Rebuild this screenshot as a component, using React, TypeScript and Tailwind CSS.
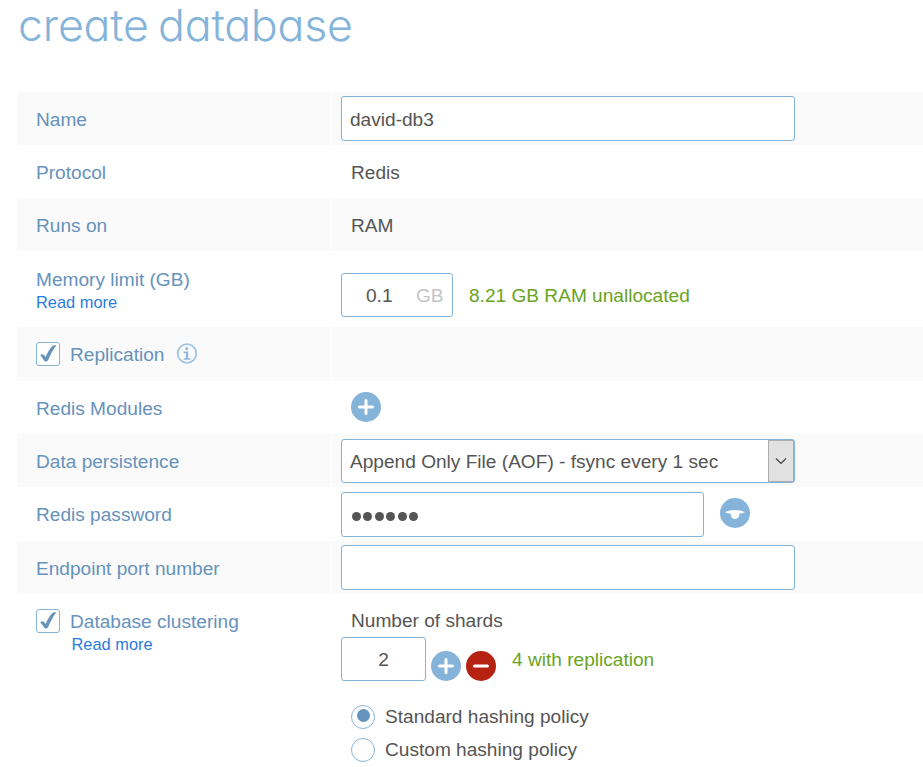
import type { ReactNode } from "react";

function Row({ label, children, className = "", shaded = false }: { label: ReactNode; children?: ReactNode; className?: string; shaded?: boolean }) {
  const bg = shaded ? "bg-[#fafafa]" : "bg-white";
  return (
    <div className={`flex gap-px ${className}`}>
      <div className={`w-[314px] shrink-0 pl-[19px] text-[#6692bb] ${bg}`}>{label}</div>
      <div className={`flex-1 pl-[9px] ${bg}`}>{children}</div>
    </div>
  );
}

const field = "flex items-center rounded-[3px] border border-[#85b4db] bg-white";

function Plus() {
  return (
    <svg width="30" height="30" viewBox="0 0 30 30" className="shrink-0">
      <circle cx="15" cy="15" r="15" fill="#85b3da" />
      <path d="M15 8.5v13M8.5 15h13" stroke="white" strokeWidth="3" strokeLinecap="round" />
    </svg>
  );
}

function Minus() {
  return (
    <svg width="30" height="30" viewBox="0 0 30 30" className="shrink-0">
      <circle cx="15" cy="15" r="15" fill="#b72312" />
      <path d="M8.5 15h13" stroke="white" strokeWidth="3" strokeLinecap="round" />
    </svg>
  );
}

function CheckBox() {
  return (
    <span className="flex h-6 w-6 shrink-0 rounded-[3px] border border-[#85b4db] bg-white">
      <svg width="22" height="22" viewBox="0 0 22 22">
        <path d="M3.2 12.4C4.4 10.8 6.2 10.9 7.1 12.2L8.6 14.1C10.3 9.8 12.6 5.8 15 3.4C16.1 2.3 18 2.1 19.3 2.4C15.8 6.8 13.4 11.6 11.3 16.8C10.4 18.9 7.9 18.9 6.9 17.2C5.8 15.2 4.8 13.8 3.2 12.4Z" fill="#6692bb" />
      </svg>
    </span>
  );
}

function Info() {
  return (
    <svg width="21" height="21" viewBox="0 0 21 21" className="-mt-px ml-3 shrink-0">
      <circle cx="11" cy="10.5" r="9.3" fill="none" stroke="#a0c5e3" strokeWidth="1.8" />
      <circle cx="10.7" cy="5.6" r="1.6" fill="#8fbadf" />
      <path d="M7.6 8.6h4.6v6.6h2.2v1.6H7.6v-1.6h2.2v-5h-2.2z" fill="#8fbadf" />
    </svg>
  );
}

export default function App() {
  return (
    <main className="h-[767px] w-[923px] overflow-hidden bg-white pl-[17px] font-['Liberation_Sans',Arial,sans-serif] text-[19.1px] leading-[22px] text-[#555]">
      <h1 className="h-[92px] w-fit origin-left scale-x-[1.027] whitespace-nowrap pl-px pt-px font-['Inter',sans-serif] text-[43.5px] font-light leading-[49px] tracking-[-0.2px] text-[#85b4db] [font-feature-settings:'cv11'] [word-spacing:-3px]">create database</h1>

      <Row shaded className="h-[53px]" label={<div className="pt-[17px]">Name</div>}>
        <div className="pt-1"><div className={`${field} h-[45px] w-[454px] pl-2 pt-0.5`}>david-db3</div></div>
      </Row>
      <Row className="h-[53px]" label={<div className="pt-[17px]">Protocol</div>}>
        <div className="pl-[10px] pt-[17px]">Redis</div>
      </Row>
      <Row shaded className="h-[53px]" label={<div className="pt-[17px]">Runs on</div>}>
        <div className="pl-[10px] pt-[17px]">RAM</div>
      </Row>
      <Row className="h-[76px]" label={
        <div className="pt-[18px]">
          <div>Memory limit (GB)</div>
          <div className="text-[16.4px] text-[#2a7be0]">Read more</div>
        </div>
      }>
        <div className="flex items-center pt-[22px]">
          <div className={`${field} h-11 w-28 pl-6 pt-0.5`}><span className="w-[50px]">0.1</span><span className="text-[#c4c4c4]">GB</span></div>
          <span className="ml-4 pt-0.5 text-[#6aa323]">8.21 GB RAM unallocated</span>
        </div>
      </Row>
      <Row shaded className="h-[54px]" label={
        <div className="flex items-center pt-[15px]"><CheckBox /><span className="pl-[10px] pt-px">Replication</span><Info /></div>
      } />
      <Row className="h-[53px]" label={<div className="pt-[17px]">Redis Modules</div>}>
        <div className="pl-[10px] pt-[11px]"><Plus /></div>
      </Row>
      <Row shaded className="h-[53px]" label={<div className="pt-[17px]">Data persistence</div>}>
        <div className="pt-[5px]">
          <div className={`${field} h-11 w-[454px] justify-between pl-2`}>
            <span className="pt-0.5">Append Only File (AOF) - fsync every 1 sec</span>
            <span className="flex h-[42px] w-[26px] items-center justify-center border border-[#adadad] bg-[#e1e1e1]">
              <svg width="12" height="8" viewBox="0 0 12 8" className="-ml-px"><path d="M1 1.5l5 5 5-5" fill="none" stroke="#444" strokeWidth="1.2" /></svg>
            </span>
          </div>
        </div>
      </Row>
      <Row className="h-[54px]" label={<div className="pt-[17px]">Redis password</div>}>
        <div className="flex pt-[5px]">
          <div className={`${field} h-[45px] w-[363px] gap-[2.5px] pl-[9.5px] pt-1`}>
            {[0, 1, 2, 3, 4, 5].map((i) => <span key={i} className="h-[9px] w-[9px] rounded-full bg-[#555]" />)}
          </div>
          <svg width="30" height="30" viewBox="0 0 30 30" className="ml-4 mt-[6px]">
            <circle cx="15" cy="15" r="15" fill="#85b3da" />
            <path d="M5 14.2C10.5 11.4 19.5 11.4 25 14.2C23 15.2 21.2 15.4 19.3 15.5V17.2C18.5 22.2 11.5 22.2 10.7 17.2V15.5C8.8 15.4 7 15.2 5 14.2Z" fill="white" />
          </svg>
        </div>
      </Row>
      <Row shaded className="h-[53px]" label={<div className="pt-[17px]">Endpoint port number</div>}>
        <div className="pt-1"><div className={`${field} h-[45px] w-[454px]`} /></div>
      </Row>
      <Row className="h-[173px]" label={
        <div className="pt-[15px]">
          <div className="flex items-center"><CheckBox /><span className="pl-[10px] pt-px">Database clustering</span></div>
          <div className="pl-[35.5px] text-[16.4px] text-[#2a7be0]">Read more</div>
        </div>
      }>
        <div className="pl-[10px] pt-4">Number of shards</div>
        <div className="mt-[5px] flex h-11">
          <div className={`${field} w-[85px] justify-center pt-0.5`}>2</div>
          <div className="ml-[5px] flex gap-[5px] pt-[14px]"><Plus /><Minus /></div>
          <span className="ml-4 pt-3 text-[#6aa323]">4 with replication</span>
        </div>
        <div className="mt-6 flex flex-col gap-[9px] pl-[10px]">
          <div className="flex h-6 items-center gap-[10px]">
            <span className="flex h-6 w-6 justify-center rounded-full border border-[#85b4db] pt-[3px]"><span className="h-[13px] w-[13px] rounded-full bg-[#6692bb]" /></span>
            Standard hashing policy
          </div>
          <div className="flex h-6 items-center gap-[10px]">
            <span className="h-6 w-6 rounded-full border border-[#85b4db]" />
            Custom hashing policy
          </div>
        </div>
      </Row>
    </main>
  );
}
